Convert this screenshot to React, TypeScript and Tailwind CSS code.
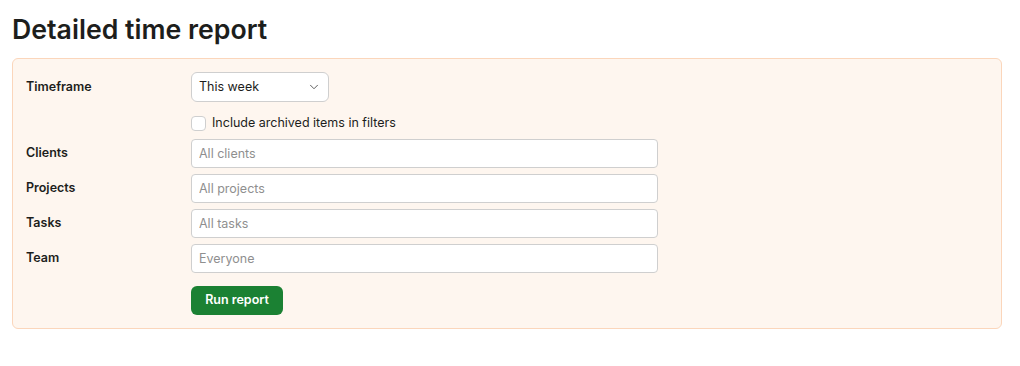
import { ChevronDown } from "lucide-react";

const fields = [
  { label: "Clients", placeholder: "All clients" },
  { label: "Projects", placeholder: "All projects" },
  { label: "Tasks", placeholder: "All tasks" },
  { label: "Team", placeholder: "Everyone" },
];

export default function App() {
  return (
    <div className="min-h-screen bg-white px-3 pt-[11px] text-[#1d1e1c] font-['Inter',sans-serif]">
      <h1 className="text-[26.7px] font-semibold leading-[36px]">Detailed time report</h1>

      <div className="mt-[11px] w-[990px] rounded-md border border-[#fbd6bb] bg-[#fef6ef] px-[13px] pt-[13px] pb-[13px] text-[12.5px]">
        <div className="flex items-center">
          <label className="w-[165px] font-semibold">Timeframe</label>
          <button className="flex h-[30px] w-[138px] items-center justify-between rounded-md border border-[#cfcfcf] bg-white pl-[7px] pr-[7px] text-[12.5px] text-[#1d1e1c]">
            <span>This week</span>
            <ChevronDown className="h-[14px] w-[14px] text-[#555]" strokeWidth={1.6} />
          </button>
        </div>

        <div className="mt-[11px] flex h-[20px] items-center pl-[165px]">
          <span className="h-[15px] w-[15px] rounded-[4px] border border-[#cfcfcf] bg-white" />
          <span className="ml-[6px]">Include archived items in filters</span>
        </div>

        <div className="mt-[6px] flex flex-col gap-[6px]">
          {fields.map((f) => (
            <div key={f.label} className="flex items-center">
              <label className="w-[165px] font-semibold">{f.label}</label>
              <input
                placeholder={f.placeholder}
                className="h-[29px] w-[467px] rounded-[4px] border border-[#cfcfcf] bg-white px-[7px] text-[12.5px] placeholder:text-[#8f8f8f] outline-none"
              />
            </div>
          ))}
        </div>

        <div className="mt-[13px] pl-[165px]">
          <button className="h-[29px] w-[92px] rounded-md bg-[#1b8133] text-[12.5px] font-semibold text-white">
            Run report
          </button>
        </div>
      </div>
    </div>
  );
}
